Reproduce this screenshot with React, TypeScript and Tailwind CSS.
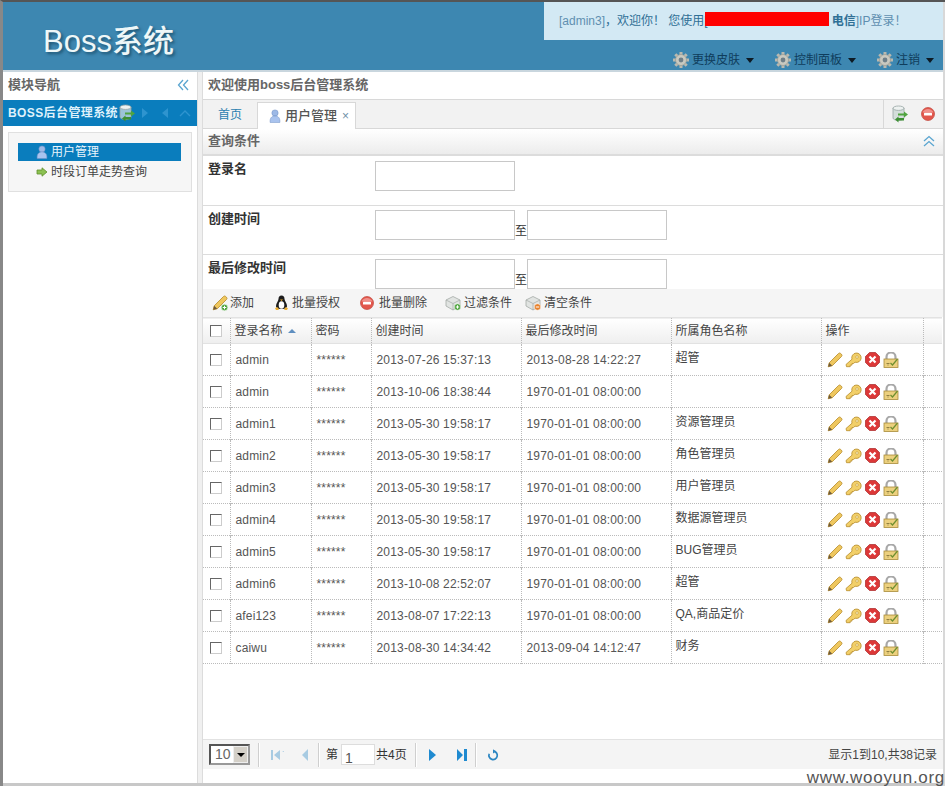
import { Fragment, type ReactNode } from 'react';

const rows = [
  ['admin', '2013-07-26 15:37:13', '2013-08-28 14:22:27', '超管'],
  ['admin', '2013-10-06 18:38:44', '1970-01-01 08:00:00', ''],
  ['admin1', '2013-05-30 19:58:17', '1970-01-01 08:00:00', '资源管理员'],
  ['admin2', '2013-05-30 19:58:17', '1970-01-01 08:00:00', '角色管理员'],
  ['admin3', '2013-05-30 19:58:17', '1970-01-01 08:00:00', '用户管理员'],
  ['admin4', '2013-05-30 19:58:17', '1970-01-01 08:00:00', '数据源管理员'],
  ['admin5', '2013-05-30 19:58:17', '1970-01-01 08:00:00', 'BUG管理员'],
  ['admin6', '2013-10-08 22:52:07', '1970-01-01 08:00:00', '超管'],
  ['afei123', '2013-08-07 17:22:13', '1970-01-01 08:00:00', 'QA,商品定价'],
  ['caiwu', '2013-08-30 14:34:42', '2013-09-04 14:12:47', '财务'],
];

const Gear = () => (
  <svg width="18" height="18" viewBox="0 0 18 18" className="shrink-0">
    <g stroke="#b9b9b0" strokeWidth="3">
      <path d="M9 1v16M1 9h16M3.3 3.3l11.4 11.4M14.7 3.3L3.3 14.7" />
    </g>
    <circle cx="9" cy="9" r="5.5" fill="#c9c9c0" stroke="#9a9a90" strokeWidth="0.7" />
    <circle cx="9" cy="9" r="2.4" fill="#6f7f88" />
  </svg>
);

const Caret = () => <span className="ml-[6px] inline-block border-x-[4.5px] border-t-[5px] border-x-transparent border-t-[#0d1a24]" />;

const User = ({ size = 16 }: { size?: number }) => (
  <svg width={size} height={size} viewBox="0 0 16 16" className="shrink-0">
    <circle cx="8" cy="4.6" r="3.6" fill="#9db9e6" stroke="#6f8fc6" strokeWidth="0.6" />
    <path d="M2.5 15.5c-.6-5 1.6-7.5 5.5-7.5s6.1 2.5 5.5 7.5z" fill="#a9c3ee" stroke="#6f8fc6" strokeWidth="0.6" />
  </svg>
);

const GreenArrow = () => (
  <svg width="12" height="10" viewBox="0 0 12 10" className="shrink-0">
    <path d="M1 3h5V.8L11 5 6 9.2V7H1z" fill="#8cc152" stroke="#5f8f2c" strokeWidth="0.8" />
  </svg>
);

const DbRefresh = ({ size = 18, body = '#d4dedb' }: { size?: number; body?: string }) => (
  <svg width={size} height={size} viewBox="0 0 18 18" className="shrink-0">
    <path d="M2 3v10c0 1.4 2.4 2.4 5.5 2.4S13 14.4 13 13V3z" fill={body} stroke="#97a5a3" strokeWidth="0.8" />
    <ellipse cx="7.5" cy="3.2" rx="5.5" ry="2.2" fill="#eef2f1" stroke="#97a5a3" strokeWidth="0.8" />
    <path d="M7 8.5h6V6.5l4 3-4 3v-2H7z" fill="#4fa43f" />
    <path d="M13 13H7.500v-1.500l-3.500 3 3.500 3V15.500H13z" fill="#3d8f33" />
  </svg>
);

const RedMinus = ({ size = 14 }: { size?: number }) => (
  <svg width={size} height={size} viewBox="0 0 14 14" className="shrink-0">
    <circle cx="7" cy="7" r="6.500" fill="#e2574c" stroke="#c0453b" strokeWidth="0.7" />
    <path d="M1.500 5.500a6 6 0 0 1 11 0z" fill="#f0908a" />
    <rect x="3" y="5.700" width="8" height="2.800" rx="0.6" fill="#fff" />
  </svg>
);

const Pencil = ({ badge = false }: { badge?: boolean }) => (
  <svg width="16" height="16" viewBox="0 0 16 16" className="shrink-0">
    <path d="M1.200 14.800l1-4L11.500 1.500a1.600 1.600 0 0 1 2.200 0l.8.8a1.600 1.600 0 0 1 0 2.200L5.200 13.800z" fill="#efc75e" stroke="#b58a2a" strokeWidth="0.8" />
    <path d="M1.200 14.800l1-4 3 3z" fill="#6e5a3c" />
    {badge && <circle cx="12.500" cy="12.500" r="3.300" fill="#4fa43f" stroke="#fff" strokeWidth="0.6" />}
    {badge && <path d="M12.500 10.700v3.600M10.700 12.500h3.600" stroke="#fff" strokeWidth="1" />}
  </svg>
);

const Key = () => (
  <svg width="17" height="16" viewBox="0 0 17 16" className="shrink-0">
    <path d="M1 12.500L7 7.200a4.700 4.700 0 1 1 3 3l-1.500 1.300H7v1.600H5.200v1.600H1.500z" fill="#f2cf68" stroke="#b58a2a" strokeWidth="0.8" />
    <circle cx="12" cy="5" r="1.300" fill="#fdf3c8" stroke="#b58a2a" strokeWidth="0.5" />
  </svg>
);

const RedX = () => (
  <svg width="15" height="15" viewBox="0 0 15 15" className="shrink-0">
    <path d="M4.500.5h6l4 4v6l-4 4h-6l-4-4v-6z" fill="#dc3838" stroke="#a92626" strokeWidth="0.7" />
    <path d="M4.500 4.500l6 6M10.500 4.500l-6 6" stroke="#fff" strokeWidth="2.200" />
  </svg>
);

const Lock = () => (
  <svg width="16" height="16" viewBox="0 0 16 16" className="shrink-0">
    <path d="M3.500 7.500V5a4.500 4.500 0 0 1 9 0v2.500" fill="none" stroke="#a8a8a8" strokeWidth="2.200" />
    <rect x="1" y="7" width="14" height="8.500" fill="#ecd07e" stroke="#a98a3a" strokeWidth="0.8" />
    <path d="M3.500 11.500h3M4.500 13h1" stroke="#7a6a30" strokeWidth="0.8" />
    <path d="M7.500 11l2 2 5-6" fill="none" stroke="#6e8f30" strokeWidth="1.200" />
  </svg>
);

const Penguin = () => (
  <svg width="15" height="16" viewBox="0 0 15 16" className="shrink-0">
    <path d="M7.500.5c2 0 3 1.500 3 3.500 0 2 2.500 4 2.500 7 0 1.500-1 3-5.500 3S2 12.500 2 11c0-3 2.500-5 2.500-7 0-2 1-3.500 3-3.500z" fill="#1c1c1c" />
    <ellipse cx="7.500" cy="10" rx="2.800" ry="3.800" fill="#fff" />
    <path d="M6 4.500h3L7.500 6zM1 13l3-.8.8 2.800H2zM14 13l-3-.8-.8 2.800H13z" fill="#f0b030" />
  </svg>
);

const Blocks = ({ plus }: { plus: boolean }) => (
  <svg width="17" height="16" viewBox="0 0 17 16" className="shrink-0">
    <path d="M1 5l7-3.500L15 5v6l-7 4-7-4z" fill="#e1e4e2" stroke="#a3a9a6" strokeWidth="0.8" />
    <path d="M1 5l7 3.500L15 5M8 8.500V15" fill="none" stroke="#a3a9a6" strokeWidth="0.7" />
    <circle cx="12.500" cy="12" r="3.300" fill={plus ? '#4fa43f' : '#e6812c'} stroke="#fff" strokeWidth="0.6" />
    <path d={plus ? 'M12.500 10.300v3.400M10.800 12h3.400' : 'M10.800 12h3.400'} stroke="#fff" strokeWidth="1" />
  </svg>
);

const Chevrons = ({ dir, color }: { dir: 'left' | 'up'; color: string }) => (
  <svg width="12" height="12" viewBox="0 0 12 12" className="shrink-0">
    <path
      d={dir === 'left' ? 'M6 1L1.500 6 6 11M11 1L6.500 6 11 11' : 'M1 6l5-4.500L11 6M1 11l5-4.500L11 11'}
      fill="none"
      stroke={color}
      strokeWidth="1.300"
    />
  </svg>
);

const Tri = ({ d, color, w = 10 }: { d: string; color: string; w?: number }) => (
  <svg width={w} height="12" viewBox={`0 0 ${w} 12`} className="shrink-0">
    <path d={d} fill={color} />
  </svg>
);

const Sep = () => <div className="mx-[5px] h-[24px] w-[2px] border-x border-l-[#cfcfcf] border-r-white" />;

const Box = () => <div className="h-[30px] w-[140px] border border-[#c8c8c8] bg-white" />;

const Check = () => <div className="mx-auto h-[12px] w-[12px] border border-t-[#666] border-l-[#666] border-r-[#ccc] border-b-[#ccc] bg-white" />;

function FormRow({ label, range, cls, labelCls }: { label: string; range?: boolean; cls: string; labelCls: string }) {
  return (
    <div className={`flex shrink-0 ${cls}`}>
      <div className={`w-[172px] pl-[5px] text-[13px] font-bold text-[#333] ${labelCls}`}>{label}</div>
      <div className="flex items-end self-start pt-[4px]">
        <Box />
        {range && (
          <Fragment>
            <span className="leading-[18px] text-[#333]">至</span>
            <Box />
          </Fragment>
        )}
      </div>
    </div>
  );
}

function ToolBtn({ icon, label, cls }: { icon: ReactNode; label: string; cls: string }) {
  return (
    <div className={`flex items-center ${cls}`}>
      {icon}
      <span className="text-[#444]">{label}</span>
    </div>
  );
}

export default function App() {
  return (
    <div
      className="relative flex h-[786px] w-[945px] flex-col overflow-hidden border-t-2 border-l-[3px] border-t-[#555] border-l-[#888] bg-white pb-[3px] pr-[2px] text-[12px] text-[#444]"
      style={{ fontFamily: '"Liberation Sans", "Noto Sans CJK SC", sans-serif' }}
    >
      {/* header */}
      <header className="relative flex h-[70px] shrink-0 justify-between border-b-2 border-[#c9d6de] bg-[#3d87b1]">
        <div className="pl-[40px] pt-[21px] text-[31px] font-medium leading-[38px] text-[#eef7f8] [text-shadow:2px_2px_3px_#1f5573]">
          Boss系统
        </div>
        <div className="flex w-[399px] flex-col items-end">
          <div className="flex h-[38px] w-full items-center whitespace-nowrap bg-[#d3e9f4] pl-[15px] text-[#2f6f95]">
            <span className="text-[#5f8fb0]">[admin3]</span>
            <span>，欢迎你！ 您使用[</span>
            <span className="-ml-[3px] mb-[5px] h-[14px] w-[124px] bg-[#ff0000]" />
            <span className="ml-[3px] font-bold">电信</span>
            <span className="text-[#5f8fb0]">]IP登录！</span>
          </div>
          <div className="flex h-[30px] items-center pr-[9px] pt-[10px] text-[#0f3d5c]">
            <Gear />
            <span className="ml-[2px]">更换皮肤</span>
            <Caret />
            <span className="w-[20px]" />
            <Gear />
            <span className="ml-[2px]">控制面板</span>
            <Caret />
            <span className="w-[20px]" />
            <Gear />
            <span className="ml-[2px]">注销</span>
            <Caret />
          </div>
        </div>
      </header>

      <div className="flex min-h-0 flex-1">
        {/* sidebar */}
        <aside className="w-[194px] shrink-0 bg-white">
          <div className="flex h-[28px] items-center justify-between pb-[2px] pl-[5px] pr-[8px] text-[13px] font-bold text-[#666]">
            <span>模块导航</span>
            <Chevrons dir="left" color="#5aa5d0" />
          </div>
          <div className="flex h-[26px] items-center whitespace-nowrap bg-[#0a7dbd] pl-[5px] font-bold text-[#dff1fb]">
            <span className="tracking-[0.4px]">BOSS后台管理系统</span>
            <DbRefresh size={18} body="#9cc3d8" />
            <span className="ml-[4px] flex items-center">
              <Tri d="M2 1l6 5-6 5z" color="#2e94cf" />
              <span className="w-[10px]" />
              <Tri d="M8 1L2 6l6 5z" color="#2e94cf" />
              <span className="w-[9px]" />
              <svg width="12" height="8" viewBox="0 0 12 8">
                <path d="M1 7l5-5 5 5" fill="none" stroke="#2e94cf" strokeWidth="1.400" />
              </svg>
            </span>
          </div>
          <div className="mx-[5px] mt-[6px] h-[60px] border border-[#e0e0e0] bg-[#f6f6f6] pl-[9px] pr-[10px] pt-[10px]">
            <div className="flex h-[18px] items-center bg-[#0a7dbd] pl-[17px] text-[#e8f4fb]">
              <User size={14} />
              <span className="ml-[2px]">用户管理</span>
            </div>
            <div className="flex h-[21px] items-center pl-[18px] text-[#444]">
              <GreenArrow />
              <span className="ml-[3px]">时段订单走势查询</span>
            </div>
          </div>
        </aside>

        {/* splitter */}
        <div className="w-[6px] shrink-0 border-x border-[#dcdcdc] bg-[#f0f0f0]" />

        {/* main */}
        <main className="flex min-w-0 flex-1 flex-col">
          <div className="flex h-[28px] shrink-0 items-center border-b border-[#d8d8d8] pb-[2px] pl-[5px] text-[13px] font-bold text-[#666]">
            欢迎使用boss后台管理系统
          </div>
          <div className="flex h-[29px] shrink-0 items-end justify-between border-b border-[#d8d8d8] bg-[#f2f2f2]">
            <div className="flex items-end">
              <div className="flex h-[26px] w-[54px] items-center justify-center text-[#2b7fb0]">首页</div>
              <div className="-mb-px flex h-[27px] w-[99px] items-center border border-b-0 border-[#d8d8d8] bg-white pl-[10px]">
                <User size={14} />
                <span className="ml-[3px] text-[13px] font-medium text-[#555]">用户管理</span>
                <span className="ml-[5px] text-[#6f8fa8]">×</span>
              </div>
            </div>
            <div className="flex h-[28px] w-[60px] items-center gap-[12px] border-l border-[#d8d8d8] pl-[7px]">
              <DbRefresh />
              <RedMinus />
            </div>
          </div>
          <div className="flex h-[27px] shrink-0 items-center justify-between border-b-2 border-[#dcdcdc] bg-gradient-to-b from-white to-[#ececec] pb-[2px] pl-[5px] pr-[8px] text-[13px] font-bold text-[#666]">
            <span>查询条件</span>
            <Chevrons dir="up" color="#5aa5d0" />
          </div>

          <FormRow label="登录名" labelCls="pt-[2px]" cls="h-[50px] border-b border-[#dcdcdc] pt-px" />
          <FormRow label="创建时间" labelCls="pt-[3px]" range cls="h-[49px] border-b border-[#dcdcdc]" />
          <FormRow label="最后修改时间" labelCls="pt-[3px]" range cls="h-[34px]" />

          <div className="flex h-[28px] shrink-0 items-center bg-[#f5f5f5] pl-[9px]">
            <ToolBtn icon={<Pencil badge />} label="添加" cls="w-[62px] gap-[2px]" />
            <ToolBtn icon={<Penguin />} label="批量授权" cls="w-[86px] gap-[3px]" />
            <ToolBtn icon={<RedMinus />} label="批量删除" cls="w-[85px] gap-[5px]" />
            <ToolBtn icon={<Blocks plus />} label="过滤条件" cls="w-[80px] gap-[2px]" />
            <ToolBtn icon={<Blocks plus={false} />} label="清空条件" cls="w-[90px] gap-[2px]" />
          </div>

          <div className="min-h-0 flex-1">
            <table className="w-[739px] table-fixed border-collapse">
              <colgroup>
                <col className="w-[27px]" />
                <col className="w-[81px]" />
                <col className="w-[60px]" />
                <col className="w-[150px]" />
                <col className="w-[150px]" />
                <col className="w-[150px]" />
                <col className="w-[102px]" />
                <col className="w-[19px]" />
              </colgroup>
              <thead>
                <tr className="h-[26px] border-y border-y-[#e2e2e2] bg-gradient-to-b from-white to-[#efefef] text-left font-normal text-[#444]">
                  <th className="border-r border-dotted border-r-[#bbb]"><Check /></th>
                  {['登录名称', '密码', '创建时间', '最后修改时间', '所属角色名称', '操作'].map((h, i) => (
                    <th key={h} className="border-r border-dotted border-r-[#bbb] pl-[4px] font-normal">
                      {h}
                      {i === 0 && <span className="ml-[5px] inline-block border-x-[4px] border-b-[4px] border-x-transparent border-b-[#5f8fc0] align-middle" />}
                    </th>
                  ))}
                  <th />
                </tr>
              </thead>
              <tbody>
                {rows.map((r, i) => (
                  <tr key={i} className="h-[32px] border-b border-dotted border-b-[#bbb] tracking-[0.17px] text-[#555]">
                    <td className="border-r border-dotted border-r-[#bbb]"><Check /></td>
                    <td className="border-r border-dotted border-r-[#bbb] pl-[5px]">{r[0]}</td>
                    <td className="border-r border-dotted border-r-[#bbb] pl-[5px]">******</td>
                    <td className="border-r border-dotted border-r-[#bbb] pl-[5px]">{r[1]}</td>
                    <td className="border-r border-dotted border-r-[#bbb] pl-[5px]">{r[2]}</td>
                    <td className="border-r border-dotted border-r-[#bbb] pb-[3px] pl-[4px] tracking-normal text-[#444]">{r[3]}</td>
                    <td className="border-r border-dotted border-r-[#bbb] pl-[5px]">
                      <div className="flex items-center">
                        <Pencil />
                        <span className="ml-[2px]"><Key /></span>
                        <span className="ml-[3px]"><RedX /></span>
                        <span className="ml-[3px]"><Lock /></span>
                      </div>
                    </td>
                    <td className="bg-white" />
                  </tr>
                ))}
              </tbody>
            </table>
          </div>

          {/* pager */}
          <div className="flex h-[30px] shrink-0 items-center justify-between border-t border-[#e2e2e2] bg-[#f4f4f4] pl-[6px] pr-[6px]">
            <div className="flex items-center text-[#333]">
              <div className="flex h-[21px] w-[41px] items-center justify-between border-2 border-t-[#555] border-l-[#555] border-r-[#999] border-b-[#999] bg-white pl-[4px] text-[14px] text-[#666]">
                10
                <span className="flex h-[17px] w-[15px] items-center justify-center border border-[#eee] bg-[#d4d0c8]">
                  <span className="border-x-[4px] border-t-[4px] border-x-transparent border-t-black" />
                </span>
              </div>
              <span className="w-[3px]" />
              <Sep />
              <span className="ml-[5px]" />
              <Tri w={14} d="M1 1h2v10H1zM10 1v10L4 6zM14 2v1l-2-1z" color="#a8cbe2" />
              <span className="w-[16px]" />
              <Tri d="M8 0v12L2 6z" color="#a8cbe2" />
              <span className="w-[3px]" />
              <Sep />
              <span className="ml-px">第</span>
              <div className="ml-[3px] mr-px h-[21px] w-[34px] border border-[#ddd] bg-white pl-[3px] pt-[5px] text-[14px] leading-[16px] text-[#555]">1</div>
              <span>共4页</span>
              <span className="w-[3px]" />
              <Sep />
              <span className="w-[5px]" />
              <Tri d="M2 0l7 6-7 6z" color="#1f8ad0" />
              <span className="w-[19px]" />
              <Tri w={12} d="M1 0l6 6-6 6zM8 0h3v12H8z" color="#1f8ad0" />
              <span className="w-[2px]" />
              <Sep />
              <span className="w-[5px]" />
              <svg width="12" height="12" viewBox="0 0 12 12">
                <path d="M6.500 2.200a4.200 4.200 0 1 1-4.300 2.600" fill="none" stroke="#2c86c2" strokeWidth="1.700" />
                <path d="M6 .2l3 2.200-3 2z" fill="#2c86c2" />
              </svg>
            </div>
            <span className="text-[#444]">显示1到10,共38记录</span>
          </div>
          <div className="h-[14px] shrink-0" />
        </main>
      </div>

      <div className="absolute inset-x-0 bottom-0 h-[3px] bg-[#c8c8c8]" />
      <div className="absolute inset-y-0 right-0 w-[2px] bg-[#d8d8d8]" />
      {/* watermark */}
      <div className="absolute bottom-0 right-0 text-[17px] font-normal leading-[17px] tracking-[0.7px] text-[#555]">
        www.wooyun.org
      </div>
    </div>
  );
}
